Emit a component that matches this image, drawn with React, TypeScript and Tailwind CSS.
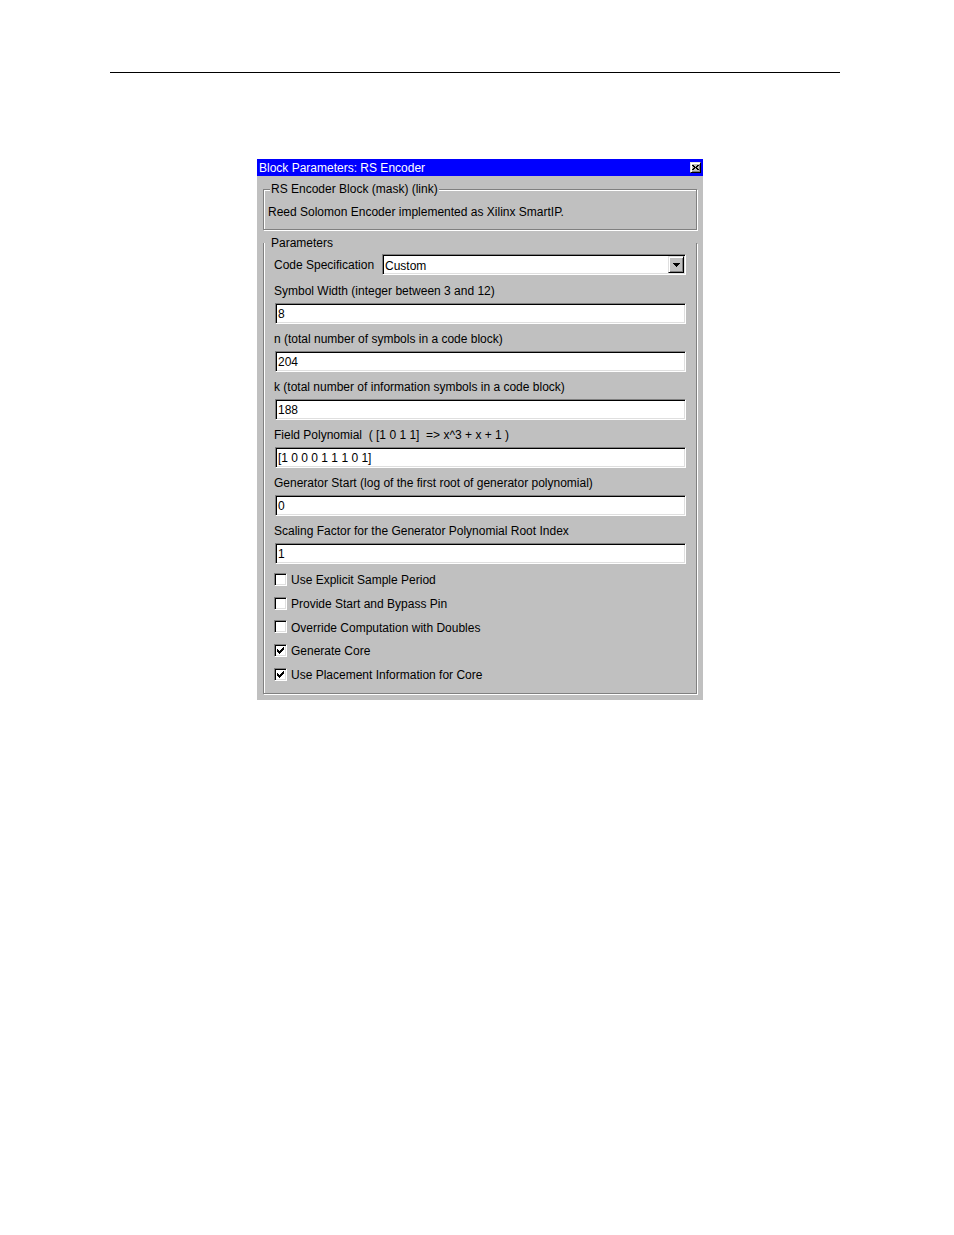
import React from "react";

const sunken =
  "border border-t-[#808080] border-l-[#808080] border-r-white border-b-white shadow-[inset_1px_1px_0_#000,inset_-1px_-1px_0_#dfdfdf]";
const raised =
  "border border-t-[#dfdfdf] border-l-[#dfdfdf] border-r-black border-b-black shadow-[inset_1px_1px_0_#fff,inset_-1px_-1px_0_#808080]";

function Check() {
  const cols = [2, 3, 4, 3, 2, 1, 0];
  return (
    <svg width="7" height="7" viewBox="0 0 7 7" shapeRendering="crispEdges">
      {cols.map((y, x) => (
        <rect key={x} x={x} y={y} width="1" height="3" fill="#000" />
      ))}
    </svg>
  );
}

function Arrow() {
  return (
    <svg width="7" height="4" viewBox="0 0 7 4" shapeRendering="crispEdges">
      <rect x="0" y="0" width="7" height="1" fill="#000" />
      <rect x="1" y="1" width="5" height="1" fill="#000" />
      <rect x="2" y="2" width="3" height="1" fill="#000" />
      <rect x="3" y="3" width="1" height="1" fill="#000" />
    </svg>
  );
}

function CloseGlyph() {
  const px = [
    [0, 0], [1, 0], [5, 0], [6, 0],
    [1, 1], [2, 1], [4, 1], [5, 1],
    [2, 2], [3, 2], [4, 2],
    [1, 3], [2, 3], [4, 3], [5, 3],
    [0, 4], [1, 4], [5, 4], [6, 4],
  ];
  return (
    <svg width="7" height="5" viewBox="0 0 7 5" shapeRendering="crispEdges">
      {px.map(([x, y], i) => (
        <rect key={i} x={x} y={y} width="1" height="1" fill="#000" />
      ))}
    </svg>
  );
}

const fields: { label: string; value: string }[] = [
  { label: "Symbol Width (integer between 3 and 12)", value: "8" },
  { label: "n (total number of symbols in a code block)", value: "204" },
  { label: "k (total number of information symbols in a code block)", value: "188" },
  { label: "Field Polynomial  ( [1 0 1 1]  => x^3 + x + 1 )", value: "[1 0 0 0 1 1 1 0 1]" },
  { label: "Generator Start (log of the first root of generator polynomial)", value: "0" },
  { label: "Scaling Factor for the Generator Polynomial Root Index", value: "1" },
];

const checks: { label: string; checked: boolean; h: string }[] = [
  { label: "Use Explicit Sample Period", checked: false, h: "h-[24px]" },
  { label: "Provide Start and Bypass Pin", checked: false, h: "h-[24px]" },
  { label: "Override Computation with Doubles", checked: false, h: "h-[23px]" },
  { label: "Generate Core", checked: true, h: "h-[24px]" },
  { label: "Use Placement Information for Core", checked: true, h: "h-[24px]" },
];

export default function App() {
  return (
    <div className="w-[954px] h-[1235px] bg-white overflow-hidden font-['Liberation_Sans',Arial,sans-serif] text-[12px] leading-[14px] text-black">
      <div className="pt-[72px] pl-[110px]">
        <div className="w-[730px] h-px bg-black" />
      </div>

      <div className="ml-[257px] mt-[86px] w-[446px] bg-[#c0c0c0] pb-[6px]">
        {/* title bar */}
        <div className="h-[17px] bg-[#0000ff] flex items-center justify-between pl-[2px] pr-[2px]">
          <span className="text-white whitespace-nowrap pt-[1px]">Block Parameters: RS Encoder</span>
          <div className={`w-[11px] h-[11px] bg-[#c0c0c0] flex items-center justify-center ${raised}`}>
            <CloseGlyph />
          </div>
        </div>

        <div className="px-[6px] pt-[6px]">
          {/* group 1 */}
          <fieldset className="border border-[#808080] shadow-[inset_1px_1px_0_#fff,1px_1px_0_#fff]">
            <legend className="ml-[6px] px-[1px] bg-[#c0c0c0] relative whitespace-nowrap">
              RS Encoder Block (mask) (link)
            </legend>
            <div className="pl-[4px] mt-[8px] pt-[1px] pb-[10px] whitespace-nowrap">
              Reed Solomon Encoder implemented as Xilinx SmartIP.
            </div>
          </fieldset>

          {/* group 2 */}
          <fieldset className="mt-[6px] border border-t-0 border-[#808080] shadow-[inset_1px_0_0_#fff,1px_1px_0_#fff]">
            <legend className="ml-[6px] px-[1px] bg-[#c0c0c0] relative whitespace-nowrap">
              Parameters
            </legend>
            <div className="pl-[10px] pb-[7px]">
              <div className="mt-[4px] flex items-center h-[21px]">
                <span className="w-[108px] whitespace-nowrap pt-[1px]">Code Specification</span>
                <div className={`w-[304px] h-[21px] bg-white flex items-stretch ${sunken}`}>
                  <div className="flex-1 flex items-center pl-[2px] pt-[2px]">Custom</div>
                  <div className={`w-[16px] my-[1px] mr-[1px] bg-[#c0c0c0] flex items-center justify-center ${raised}`}>
                    <Arrow />
                  </div>
                </div>
              </div>

              {fields.map((f, i) => (
                <div key={i}>
                  <div className={`${i === 0 ? "mt-[8px]" : "mt-[7px]"} h-[14px] pt-[1px] box-content whitespace-pre`}>
                    {f.label}
                  </div>
                  <div className={`mt-[5px] ml-[1px] w-[411px] h-[21px] bg-white flex items-center pl-[2px] whitespace-pre ${sunken}`}>
                    {f.value}
                  </div>
                </div>
              ))}

              <div className="mt-[3px]">
                {checks.map((c, i) => (
                  <div key={i} className={`${c.h} flex items-center`}>
                    <div className={`w-[13px] h-[13px] bg-white flex items-center justify-center ${sunken}`}>
                      {c.checked && <Check />}
                    </div>
                    <span className="ml-[4px] pt-[2px] whitespace-nowrap">{c.label}</span>
                  </div>
                ))}
              </div>
            </div>
          </fieldset>
        </div>
      </div>
    </div>
  );
}
